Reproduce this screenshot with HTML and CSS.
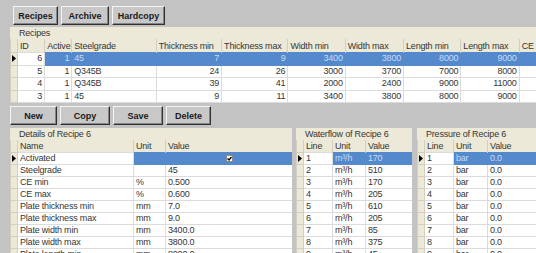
FILE: index.html
```html
<!doctype html>
<html>

<head>
  <meta charset="utf-8">
  <title>Recipes</title>
  <link rel="stylesheet" href="styles.css">
</head>

<body>
  <div class="tabs">
    <button class="btn tab1">Recipes</button>
    <button class="btn tab2">Archive</button>
    <button class="btn tab3">Hardcopy</button>
  </div>

  <div class="grid recipes">
    <div class="caption">Recipes</div>
    <table>
      <colgroup>
        <col style="width:7px"><col style="width:27px"><col style="width:27px"><col style="width:84px">
        <col style="width:65px"><col style="width:66px"><col style="width:57px"><col style="width:58px">
        <col style="width:57px"><col style="width:58px"><col style="width:60px">
      </colgroup>
      <tr class="head">
        <th></th><th>ID</th><th>Active</th><th>Steelgrade</th><th>Thickness min</th><th>Thickness max</th>
        <th>Width min</th><th>Width max</th><th>Length min</th><th>Length max</th><th>CE max</th>
      </tr>
      <tr class="current">
        <td class="rh"><svg class="arrow" width="4" height="7"><path d="M0 0L4 3.5L0 7z"/></svg></td>
        <td class="num">6</td><td class="num sel">1</td><td class="sel">45</td><td class="num sel">7</td><td class="num sel">9</td>
        <td class="num sel">3400</td><td class="num sel">3800</td><td class="num sel">8000</td><td class="num sel">9000</td><td class="sel"></td>
      </tr>
      <tr>
        <td class="rh"></td><td class="num">5</td><td class="num">1</td><td>Q345B</td><td class="num">24</td><td class="num">26</td>
        <td class="num">3000</td><td class="num">3700</td><td class="num">7000</td><td class="num">8000</td><td></td>
      </tr>
      <tr>
        <td class="rh"></td><td class="num">4</td><td class="num">1</td><td>Q345B</td><td class="num">39</td><td class="num">41</td>
        <td class="num">2000</td><td class="num">2400</td><td class="num">9000</td><td class="num">11000</td><td></td>
      </tr>
      <tr>
        <td class="rh"></td><td class="num">3</td><td class="num">1</td><td>45</td><td class="num">9</td><td class="num">11</td>
        <td class="num">3400</td><td class="num">3800</td><td class="num">8000</td><td class="num">9000</td><td></td>
      </tr>
    </table>
  </div>

  <div class="actions">
    <button class="btn b-new">New</button>
    <button class="btn b-copy">Copy</button>
    <button class="btn b-save">Save</button>
    <button class="btn b-delete">Delete</button>
  </div>

  <div class="panels">
    <div class="grid details">
      <div class="caption">Details of Recipe 6</div>
      <table>
        <colgroup>
          <col style="width:7px"><col style="width:116px"><col style="width:32px"><col style="width:127px">
        </colgroup>
        <tr class="head"><th></th><th>Name</th><th>Unit</th><th>Value</th></tr>
        <tr>
          <td class="rh"><svg class="arrow" width="4" height="7"><path d="M0 0L4 3.5L0 7z"/></svg></td>
          <td>Activated</td><td class="sel"></td>
          <td class="sel check"><svg width="7" height="7"><rect x="0.5" y="0.5" width="6" height="6" fill="#fff" stroke="#8a8a8a"/><path d="M1.5 3.5L3 5L5.5 2" fill="none" stroke="#000" stroke-width="1.3"/></svg></td>
        </tr>
        <tr><td class="rh"></td><td>Steelgrade</td><td></td><td>45</td></tr>
        <tr><td class="rh"></td><td>CE min</td><td>%</td><td>0.500</td></tr>
        <tr><td class="rh"></td><td>CE max</td><td>%</td><td>0.600</td></tr>
        <tr><td class="rh"></td><td>Plate thickness min</td><td>mm</td><td>7.0</td></tr>
        <tr><td class="rh"></td><td>Plate thickness max</td><td>mm</td><td>9.0</td></tr>
        <tr><td class="rh"></td><td>Plate width min</td><td>mm</td><td>3400.0</td></tr>
        <tr><td class="rh"></td><td>Plate width max</td><td>mm</td><td>3800.0</td></tr>
        <tr><td class="rh"></td><td>Plate length min</td><td>mm</td><td>8000.0</td></tr>
      </table>
    </div>

    <div class="grid water">
      <div class="caption">Waterflow of Recipe 6</div>
      <table>
        <colgroup>
          <col style="width:7px"><col style="width:29px"><col style="width:33px"><col style="width:47px">
        </colgroup>
        <tr class="head"><th></th><th>Line</th><th>Unit</th><th>Value</th></tr>
        <tr>
          <td class="rh"><svg class="arrow" width="4" height="7"><path d="M0 0L4 3.5L0 7z"/></svg></td>
          <td>1</td><td class="sel">m³/h</td><td class="sel">170</td>
        </tr>
        <tr><td class="rh"></td><td>2</td><td>m³/h</td><td>510</td></tr>
        <tr><td class="rh"></td><td>3</td><td>m³/h</td><td>170</td></tr>
        <tr><td class="rh"></td><td>4</td><td>m³/h</td><td>205</td></tr>
        <tr><td class="rh"></td><td>5</td><td>m³/h</td><td>610</td></tr>
        <tr><td class="rh"></td><td>6</td><td>m³/h</td><td>205</td></tr>
        <tr><td class="rh"></td><td>7</td><td>m³/h</td><td>85</td></tr>
        <tr><td class="rh"></td><td>8</td><td>m³/h</td><td>375</td></tr>
        <tr><td class="rh"></td><td>9</td><td>m³/h</td><td>45</td></tr>
      </table>
    </div>

    <div class="grid pressure">
      <div class="caption">Pressure of Recipe 6</div>
      <table>
        <colgroup>
          <col style="width:7px"><col style="width:29px"><col style="width:34px"><col style="width:60px">
        </colgroup>
        <tr class="head"><th></th><th>Line</th><th>Unit</th><th>Value</th></tr>
        <tr>
          <td class="rh"><svg class="arrow" width="4" height="7"><path d="M0 0L4 3.5L0 7z"/></svg></td>
          <td>1</td><td class="sel">bar</td><td class="sel">0.0</td>
        </tr>
        <tr><td class="rh"></td><td>2</td><td>bar</td><td>0.0</td></tr>
        <tr><td class="rh"></td><td>3</td><td>bar</td><td>0.0</td></tr>
        <tr><td class="rh"></td><td>4</td><td>bar</td><td>0.0</td></tr>
        <tr><td class="rh"></td><td>5</td><td>bar</td><td>0.0</td></tr>
        <tr><td class="rh"></td><td>6</td><td>bar</td><td>0.0</td></tr>
        <tr><td class="rh"></td><td>7</td><td>bar</td><td>0.0</td></tr>
        <tr><td class="rh"></td><td>8</td><td>bar</td><td>0.0</td></tr>
        <tr><td class="rh"></td><td>9</td><td>bar</td><td>0.0</td></tr>
      </table>
    </div>
  </div>
</body>

</html>
```

FILE: styles.css
```css
body {
  margin: 0;
  width: 536px;
  height: 253px;
  overflow: hidden;
  background-color: #c3c3c3;
  font-family: "Liberation Sans", Arial, sans-serif;
  font-size: 9px;
  letter-spacing: -0.2px;
  color: #363636;
}

.tabs {
  display: flex;
  gap: 3px;
  padding: 6px 0 0 13px;
}

.btn {
  height: 19px;
  padding: 0;
  font-family: "Liberation Sans", Arial, sans-serif;
  font-size: 9px;
  font-weight: bold;
  color: #1a1a1a;
  background-color: #c8c8c8;
  border: 1px solid;
  border-color: #f4f4f4 #303030 #303030 #f4f4f4;
  box-shadow: inset -1px -1px #858585;
}

.tab1 { width: 45px; }
.tab2 { width: 48px; }
.tab3 { width: 53px; }

.grid {
  background-color: #ffffff;
  overflow: hidden;
  flex-shrink: 0;
}

.recipes {
  margin: 2px 0 0 10px;
  width: 570px;
}

.caption {
  height: 12px;
  line-height: 12px;
  padding-left: 9px;
  background-color: #ece9d8;
}

table {
  border-collapse: collapse;
  table-layout: fixed;
  width: 100%;
}

th, td {
  padding: 0 2px;
  white-space: nowrap;
  overflow: hidden;
  text-align: left;
  font-weight: normal;
}

th {
  height: 12px;
  background-color: #ece9d8;
  border-left: 1px solid #d2cfc0;
}

td {
  height: 11px;
  line-height: 11px;
  border: 1px solid #dcdcdc;
}

.recipes th {
  height: 13px;
}

.recipes td {
  height: 11.5px;
  line-height: 11.5px;
}

td.rh {
  padding: 0;
  background-color: #ece9d8;
  border-color: #d2cfc0;
  text-align: center;
}

.arrow {
  display: block;
  margin: 0 auto;
}

td.num {
  text-align: right;
}

td.sel {
  background-color: #5489cc;
  color: #c6dbf5;
  border-color: #5489cc;
}

td.check {
  text-align: center;
}

td.check svg {
  display: block;
  margin: 0 auto;
}

.actions {
  display: flex;
  gap: 3px;
  margin: 3px 0 0 10px;
}

.b-new { width: 47px; }
.b-copy { width: 50px; }
.b-save { width: 50px; }
.b-delete { width: 45px; }

.panels {
  display: flex;
  margin-top: 3px;
}

.details {
  margin-left: 10px;
  width: 282px;
}

.water {
  margin-left: 4px;
  width: 116px;
}

.pressure {
  margin-left: 5px;
  width: 130px;
}
```
